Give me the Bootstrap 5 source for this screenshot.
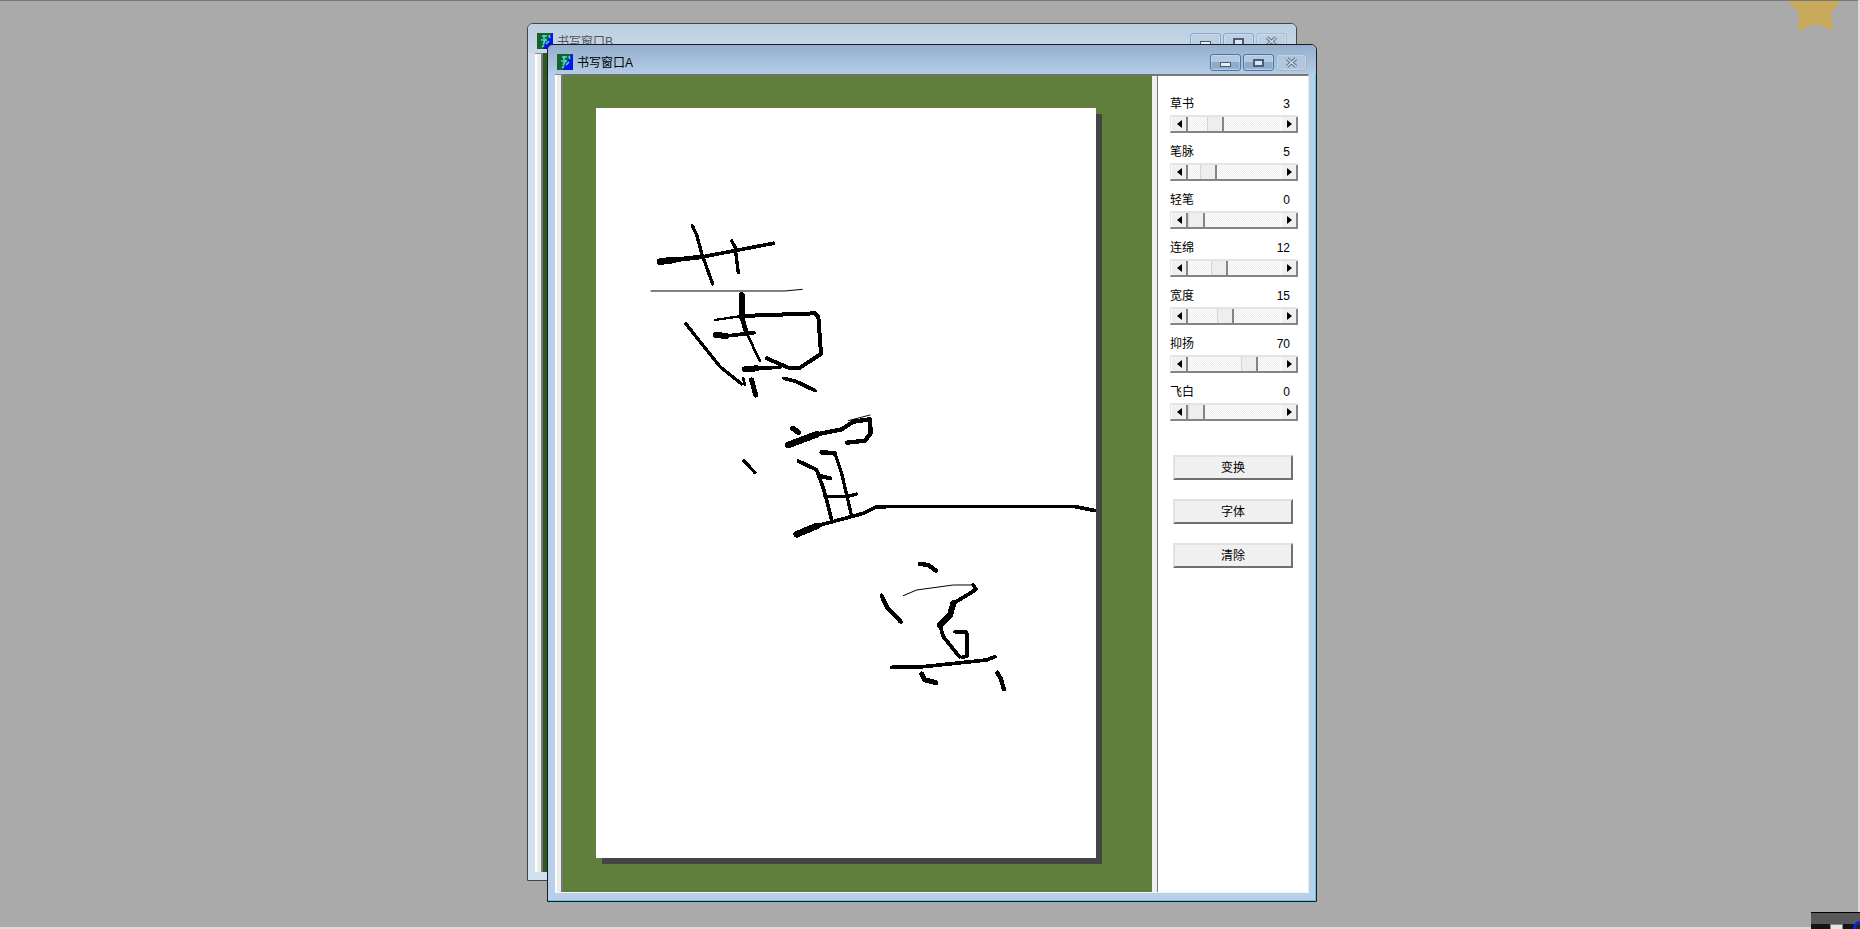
<!DOCTYPE html>
<html lang="zh-CN">
<head>
  <meta charset="UTF-8">
  <title>书写窗口</title>
  <link href="https://cdn.jsdelivr.net/npm/bootstrap@5.3.2/dist/css/bootstrap.min.css" rel="stylesheet">
  <style>
    html, body { height: 100%; }
    body {
      background: #aaaaaa;
      overflow: hidden;
      font: 12px/14px "Liberation Sans", "Noto Sans CJK SC", sans-serif;
      color: #000;
    }
    .desk-top { height: 1px; background: #777; }
    .desk-bottom { left: 0; right: 0; bottom: 0; height: 2px; background: #dcdcdc; }
    .desk-right { top: 0; right: 0; bottom: 0; width: 2px; background: #dcdcdc; }
    .desk-star { right: 0; top: 0; width: 100px; height: 40px; }
    .tray { right: 0; bottom: 0; width: 49px; height: 17px; background: linear-gradient(#585858 0 11px, #141414 11px); border-top: 1px solid #000; overflow: hidden; }
    .tray-doc { left: 19px; top: 11px; width: 13px; height: 8px; background: #e4e8ec; border: 1px solid #889; }
    .tray-dot { right: -7px; top: 8px; width: 14px; height: 14px; border: 3px solid #1020e0; border-radius: 50%; background: #222; }

    .win { border: 1px solid #1c1c1c; border-radius: 6px 6px 0 0; }
    .win-a {
      left: 547px; top: 44px; width: 770px; height: 858px;
      background: #b8d0ea;
      box-shadow: inset -1px -1px 0 #58c8f0;
    }
    .win-b { left: 527px; top: 23px; width: 770px; height: 858px; background: #d3e1ee; border-color: #444; }
    .win-title { height: 29px; padding: 9px 9px 0 9px; border-radius: 5px 5px 0 0; }
    .win-a .win-title { background: linear-gradient(#93afcd, #b5cde6); }
    .win-b .win-title { background: linear-gradient(#bccfe0, #c9d9e8); color: #555; }
    .win-icon { width: 16px; height: 16px; flex: none; }
    .win-name { margin-left: 4px; line-height: 18px; }
    .win-btn {
      width: 31px; height: 17px; margin-left: 2px;
      border: 1px solid #4f74a4; border-radius: 3px;
      background: linear-gradient(#b3c9e1 0 50%, #8dabcb 50% 85%, #a9c3de 100%);
      box-shadow: inset 0 0 0 1px rgba(255,255,255,.25);
    }
    .win-btn.is-off { border-color: #9db4cd; background: #b0c6dd; }
    .win-b .win-btn { border-color: #8aa6c8; background: #bcd0e3; }
    .win-b .win-btn.is-off { border-color: #a9bdd2; }
    .glyph-min { width: 11px; height: 5px; margin-top: 7px; background: #e8eef4; border: 1px solid #4a5a6c; }
    .glyph-max { width: 11px; height: 8px; background: #dde6ee; border: 2px solid #4a5f76; }
    .glyph-x { width: 13px; height: 11px; }

    .win-body { margin: 0 7px 0 7px; height: 819px; }
    .win-a .win-body { border-bottom: 1px solid #f4f4f4; }
    .side-strip { width: 8px; background: linear-gradient(90deg, #fff 0 2px, #ececec 2px 6px, #777 6px 8px); border-top: 1px solid #888; }
    .green-pane { width: 589px; background: #617f3c; border-top: 2px solid #6f7468; padding: 32px 0 0 33px; }
    .win-b .green-pane { background: #2d5a1e; border-top: 0; }
    .paper {
      width: 500px; height: 750px;
      background: #fff;
      box-shadow: 6px 6px 0 #444;
    }
    .paper svg { display: block; width: 500px; height: 750px; }
    .paper path { fill: none; stroke: #000; stroke-linecap: round; stroke-linejoin: round; }
    .split { width: 6px; background: linear-gradient(90deg, #efefef 0 5px, #777 5px 6px); border-top: 2px solid #777; }
    .tool-pane { width: 151px; background: #fff; border-top: 2px solid #777; border-right: 1px solid #e8e8e8; padding: 21px 0 0 12px; }

    .slider-group { width: 128px; margin-bottom: 12px; }
    .slider-label { margin-bottom: 4px; padding-right: 8px; }
    .slider {
      height: 18px;
      border-top: 2px solid #e4e4e4;
      border-left: 1px solid #e4e4e4;
      border-bottom: 2px solid #858585;
      background: repeating-conic-gradient(#ececec 0 25%, #fff 0 50%) 0 0 / 2px 2px;
    }
    .sb-btn {
      width: 17px; flex: none;
      background: #f0f0f0;
      border-left: 1px solid #fff;
      border-right: 2px solid #858585;
    }
    .sb-thumb {
      width: 17px; flex: none;
      background: #eeeeee;
      border-left: 1px solid #d4d4d4;
      border-right: 2px solid #858585;
    }
    .arrow-l, .arrow-r { width: 0; height: 0; border-style: solid; border-color: transparent; border-width: 4px 0 4px 0; }
    .arrow-l { border-right: 5px solid #000; }
    .arrow-r { border-left: 5px solid #000; }

    .tool-buttons { margin: 34px 0 0 3px; width: 120px; gap: 19px; }
    .tool-btn {
      height: 25px; padding: 0;
      font-size: 12px; line-height: 14px; color: #000;
      background: #f0f0f0;
      border-style: solid; border-width: 2px;
      border-color: #e2e2e2 #707070 #707070 #e2e2e2;
      border-radius: 0;
    }
  </style>
</head>
<body>
<div class="desk-top"></div>
<div class="desk-bottom position-absolute"></div>
<div class="desk-right position-absolute"></div>

<svg class="desk-star position-absolute" viewBox="1760 0 100 40">
  <polygon points="1788,1 1840,1 1831,13 1833,30 1815,24 1798,31 1799,13" fill="#c9a95a"/>
</svg>

<!-- ventana de atras -->
<div class="win win-b position-absolute">
  <div class="win-title d-flex">
    <svg class="win-icon" viewBox="0 0 16 16"><rect width="16" height="16" fill="#1d5f2a"/><polygon points="15,0 16,0 16,16 6,16 10,8" fill="#0414f0"/><path d="M5 3h5M7 2v4M4 7h6M9 6l-3 5M12 8l-3 3M7 12l-2 2M12 2l1 3" stroke="#3fe0e0" stroke-width="1.6" fill="none"/></svg>
    <span class="win-name">书写窗口B</span>
    <div class="ms-auto d-flex align-items-start">
      <div class="win-btn d-flex justify-content-center"><div class="glyph-min"></div></div>
      <div class="win-btn d-flex justify-content-center align-items-center"><div class="glyph-max"></div></div>
      <div class="win-btn is-off d-flex justify-content-center align-items-center"><svg class="glyph-x" viewBox="0 0 13 11"><path d="M2 1.5L11 9.5M11 1.5L2 9.5" stroke="#5f7389" stroke-width="3.4" fill="none"/><path d="M2 1.5L11 9.5M11 1.5L2 9.5" stroke="#d9e2ec" stroke-width="1.2" fill="none"/></svg></div>
    </div>
  </div>
  <div class="win-body d-flex">
    <div class="side-strip"></div>
    <div class="green-pane"></div>
  </div>
</div>

<!-- ventana principal -->
<div class="win win-a position-absolute">
  <div class="win-title d-flex">
    <svg class="win-icon" viewBox="0 0 16 16"><rect width="16" height="16" fill="#1d5f2a"/><polygon points="15,0 16,0 16,16 6,16 10,8" fill="#0414f0"/><path d="M5 3h5M7 2v4M4 7h6M9 6l-3 5M12 8l-3 3M7 12l-2 2M12 2l1 3" stroke="#3fe0e0" stroke-width="1.6" fill="none"/></svg>
    <span class="win-name">书写窗口A</span>
    <div class="ms-auto d-flex align-items-start">
      <div class="win-btn d-flex justify-content-center"><div class="glyph-min"></div></div>
      <div class="win-btn d-flex justify-content-center align-items-center"><div class="glyph-max"></div></div>
      <div class="win-btn is-off d-flex justify-content-center align-items-center"><svg class="glyph-x" viewBox="0 0 13 11"><path d="M2 1.5L11 9.5M11 1.5L2 9.5" stroke="#5f7389" stroke-width="3.4" fill="none"/><path d="M2 1.5L11 9.5M11 1.5L2 9.5" stroke="#d9e2ec" stroke-width="1.2" fill="none"/></svg></div>
    </div>
  </div>
  <div class="win-body d-flex">
    <div class="side-strip"></div>
    <div class="green-pane">
      <div class="paper">
        <svg viewBox="596 108 500 750" shape-rendering="crispEdges">
          <g transform="translate(630 210) scale(.3333)">
            <path stroke-width="20" d="M90 155L130 150"/>
            <path stroke-width="14" d="M130 150L220 140"/>
            <path stroke-width="11" d="M220 140L430 100"/>
            <path stroke-width="10" d="M187 47L200 75L215 130L248 222"/>
            <path stroke-width="10" d="M305 93L315 110L325 188"/>
            <path stroke-width="3" d="M63 243L465 243L517 238"/>
            <path stroke-width="18" d="M335 255L335 320"/>
            <path stroke-width="14" d="M335 320L350 370"/>
            <path stroke-width="8" d="M350 370L390 453"/>
            <path stroke-width="7" d="M255 330L335 318"/>
            <path stroke-width="12" d="M335 318L555 310L565 320L573 432L510 473L480 475L410 445"/>
            <path stroke-width="18" d="M258 375L290 378"/>
            <path stroke-width="11" d="M290 378L372 368"/>
            <path stroke-width="10" d="M168 342L270 470L335 522"/>
            <path stroke-width="8" d="M340 505L345 525"/>
            <path stroke-width="18" d="M345 478L380 475"/>
            <path stroke-width="11" d="M380 475L450 472"/>
            <path stroke-width="15" d="M365 510L377 555"/>
            <path stroke-width="11" d="M462 505L500 515L555 542"/>
          </g>
          <g transform="translate(720 400) scale(.3333)">
            <path stroke-width="10" d="M72 183L105 218"/>
            <path stroke-width="16" d="M218 85L235 97"/>
            <path stroke-width="20" d="M205 135L290 103"/>
            <path stroke-width="13" d="M290 103L365 88L400 65L450 58L452 100L435 122L382 128"/>
            <path stroke-width="3" d="M385 62L450 45"/>
            <path stroke-width="14" d="M305 157L345 160"/>
            <path stroke-width="10" d="M345 160L365 220L393 340"/>
            <path stroke-width="11" d="M235 183L290 210L310 265L320 300L335 360"/>
            <path stroke-width="13" d="M300 228L330 235"/>
            <path stroke-width="10" d="M315 290L380 290L410 282"/>
            <path stroke-width="20" d="M230 403L290 378"/>
            <path stroke-width="11" d="M290 378L430 340L465 322L500 320L1065 320L1125 332"/>
          </g>
          <g transform="translate(860 550) scale(.3333)">
            <path stroke-width="13" d="M180 42L205 45L228 62"/>
            <path stroke-width="13" d="M65 137L80 170L122 215"/>
            <path stroke-width="3" d="M130 137L170 120L280 105L340 105"/>
            <path stroke-width="11" d="M340 105L348 118L330 130L280 160"/>
            <path stroke-width="18" d="M280 160L270 195L240 225"/>
            <path stroke-width="11" d="M240 225L250 260L298 320"/>
            <path stroke-width="11" d="M285 245L320 247L322 318L308 322"/>
            <path stroke-width="11" d="M95 352L190 350L380 330L405 320"/>
            <path stroke-width="15" d="M185 372L195 390L228 398"/>
            <path stroke-width="13" d="M412 368L422 385L432 418"/>
          </g>
        </svg>
      </div>
    </div>
    <div class="split"></div>
    <div class="tool-pane">
      <div class="slider-group">
        <div class="slider-label d-flex justify-content-between"><span>草书</span><span>3</span></div>
        <div class="slider d-flex"><div class="sb-btn d-flex align-items-center justify-content-center"><div class="arrow-l"></div></div><div class="sb-thumb" style="margin-left:19px"></div><div class="sb-btn ms-auto d-flex align-items-center justify-content-center"><div class="arrow-r"></div></div></div>
      </div>
      <div class="slider-group">
        <div class="slider-label d-flex justify-content-between"><span>笔脉</span><span>5</span></div>
        <div class="slider d-flex"><div class="sb-btn d-flex align-items-center justify-content-center"><div class="arrow-l"></div></div><div class="sb-thumb" style="margin-left:12px"></div><div class="sb-btn ms-auto d-flex align-items-center justify-content-center"><div class="arrow-r"></div></div></div>
      </div>
      <div class="slider-group">
        <div class="slider-label d-flex justify-content-between"><span>轻笔</span><span>0</span></div>
        <div class="slider d-flex"><div class="sb-btn d-flex align-items-center justify-content-center"><div class="arrow-l"></div></div><div class="sb-thumb" style="margin-left:0"></div><div class="sb-btn ms-auto d-flex align-items-center justify-content-center"><div class="arrow-r"></div></div></div>
      </div>
      <div class="slider-group">
        <div class="slider-label d-flex justify-content-between"><span>连绵</span><span>12</span></div>
        <div class="slider d-flex"><div class="sb-btn d-flex align-items-center justify-content-center"><div class="arrow-l"></div></div><div class="sb-thumb" style="margin-left:23px"></div><div class="sb-btn ms-auto d-flex align-items-center justify-content-center"><div class="arrow-r"></div></div></div>
      </div>
      <div class="slider-group">
        <div class="slider-label d-flex justify-content-between"><span>宽度</span><span>15</span></div>
        <div class="slider d-flex"><div class="sb-btn d-flex align-items-center justify-content-center"><div class="arrow-l"></div></div><div class="sb-thumb" style="margin-left:29px"></div><div class="sb-btn ms-auto d-flex align-items-center justify-content-center"><div class="arrow-r"></div></div></div>
      </div>
      <div class="slider-group">
        <div class="slider-label d-flex justify-content-between"><span>抑扬</span><span>70</span></div>
        <div class="slider d-flex"><div class="sb-btn d-flex align-items-center justify-content-center"><div class="arrow-l"></div></div><div class="sb-thumb" style="margin-left:53px"></div><div class="sb-btn ms-auto d-flex align-items-center justify-content-center"><div class="arrow-r"></div></div></div>
      </div>
      <div class="slider-group">
        <div class="slider-label d-flex justify-content-between"><span>飞白</span><span>0</span></div>
        <div class="slider d-flex"><div class="sb-btn d-flex align-items-center justify-content-center"><div class="arrow-l"></div></div><div class="sb-thumb" style="margin-left:0"></div><div class="sb-btn ms-auto d-flex align-items-center justify-content-center"><div class="arrow-r"></div></div></div>
      </div>
      <div class="tool-buttons d-flex flex-column">
        <button type="button" class="btn tool-btn">变换</button>
        <button type="button" class="btn tool-btn">字体</button>
        <button type="button" class="btn tool-btn">清除</button>
      </div>
    </div>
  </div>
</div>

<div class="tray position-absolute">
  <div class="tray-doc position-absolute"></div>
  <div class="tray-dot position-absolute"></div>
</div>

<script src="https://cdn.jsdelivr.net/npm/bootstrap@5.3.2/dist/js/bootstrap.bundle.min.js"></script>
</body>
</html>
